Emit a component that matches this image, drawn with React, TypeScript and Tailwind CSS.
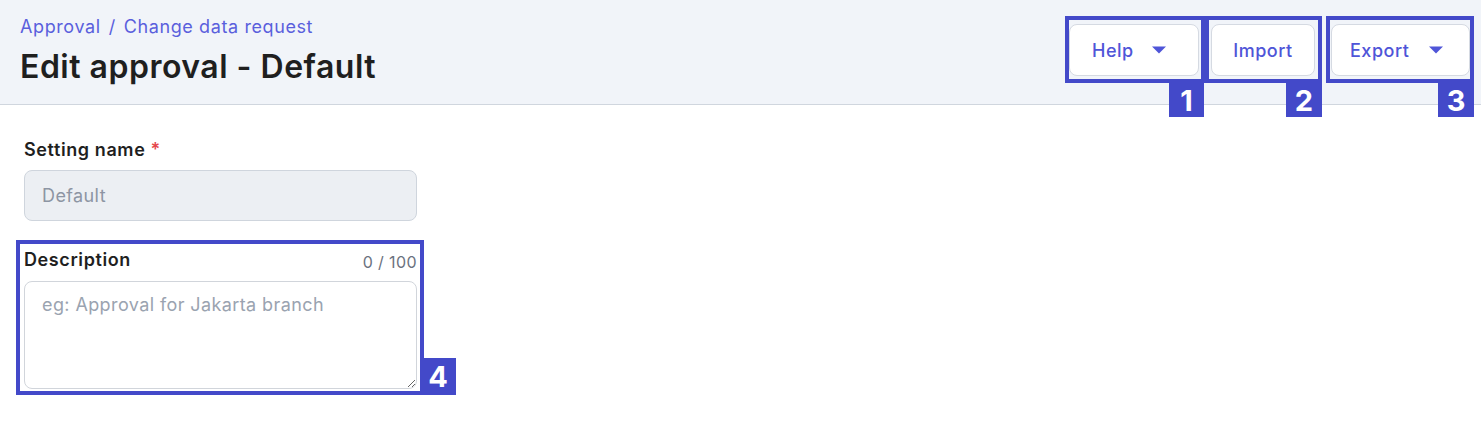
const Caret = () => (
    <svg width="16" height="10" viewBox="0 0 16 10" className="ml-auto">
        <path d="M1 1.5h14L8 8.5z" fill="#4f55d8" />
    </svg>
)

const Mark = ({ box, badge, n }: { box: string; badge: string; n: string }) => (
    <>
        <div className={`absolute border-4 border-[#4349c9] ${box}`} />
        <div className={`absolute bg-[#4349c9] text-white font-bold text-[29px] leading-none flex items-center justify-center ${badge}`}>
            {n}
        </div>
    </>
)

export default function App() {
    return (
        <div className="relative w-[1481px] h-[426px] bg-white overflow-hidden" style={{ fontFamily: "Inter, 'Noto Sans', sans-serif" }}>
            <header className="h-[105px] bg-[#f1f4f9] border-b border-[#d0d6de] flex justify-between pl-5 pr-[11px]">
                <div className="pt-[15px]">
                    <div className="text-[18px] leading-6 text-[#5a5fdd] tracking-[0.6px] flex gap-2">
                        <span>Approval</span>
                        <span>/</span>
                        <span>Change data request</span>
                    </div>
                    <h1 className="mt-2 text-[32px] leading-10 font-semibold text-[#1f1f1f] tracking-[0.5px]">Edit approval - Default</h1>
                </div>
                <div className="flex items-start pt-6">
                    <button className="w-[130px] h-[52px] rounded-lg bg-white border border-[#d5dae2] flex items-center pl-[22px] pr-[31px] text-[18px] font-medium tracking-[0.5px] text-[#4f55d8]">
                        Help
                        <Caret />
                    </button>
                    <button className="ml-3 w-[104px] h-[52px] rounded-lg bg-white border border-[#d5dae2] flex items-center justify-center text-[18px] font-medium tracking-[0.5px] text-[#4f55d8]">
                        Import
                    </button>
                    <button className="ml-4 w-[139px] h-[52px] rounded-lg bg-white border border-[#d5dae2] flex items-center pl-[18px] pr-[25px] text-[18px] font-medium tracking-[0.5px] text-[#4f55d8]">
                        Export
                        <Caret />
                    </button>
                </div>
            </header>

            <main className="px-6 pt-[33px] w-[441px]">
                <label className="block text-[18px] leading-6 font-semibold tracking-[0.6px] text-[#1f1f1f]">
                    Setting name <span className="text-[#e5484d]">*</span>
                </label>
                <div className="mt-2 h-[51px] rounded-lg bg-[#eceff3] border border-[#cfd5dd] flex items-center px-[17px] text-[18px] tracking-[0.4px] text-[#8d95a3]">
                    Default
                </div>

                <div className="mt-[27px] flex items-end justify-between">
                    <label className="text-[18px] leading-6 font-semibold tracking-[0.6px] text-[#1f1f1f]">Description</label>
                    <span className="text-[16px] leading-5 tracking-[0.4px] text-[#6b7280]">0 / 100</span>
                </div>
                <textarea
                    className="mt-[9px] block w-full h-[108px] rounded-lg border border-[#d1d5db] px-[17px] py-[9px] text-[18px] tracking-[0.4px] placeholder:text-[#9aa3b0] outline-none resize-y"
                    placeholder="eg: Approval for Jakarta branch"
                />
            </main>

            <Mark n="1" box="left-[1065px] top-4 w-[140px] h-[67px]" badge="left-[1169px] top-[83px] w-[35px] h-[34px]" />
            <Mark n="2" box="left-[1205px] top-4 w-[117px] h-[67px]" badge="left-[1286px] top-[83px] w-[36px] h-[34px]" />
            <Mark n="3" box="left-[1326px] top-4 w-[148px] h-[67px]" badge="left-[1438px] top-[83px] w-[36px] h-[34px]" />
            <Mark n="4" box="left-4 top-[240px] w-[408px] h-[155px]" badge="left-[420px] top-[358px] w-[36px] h-[37px]" />
        </div>
    )
}
